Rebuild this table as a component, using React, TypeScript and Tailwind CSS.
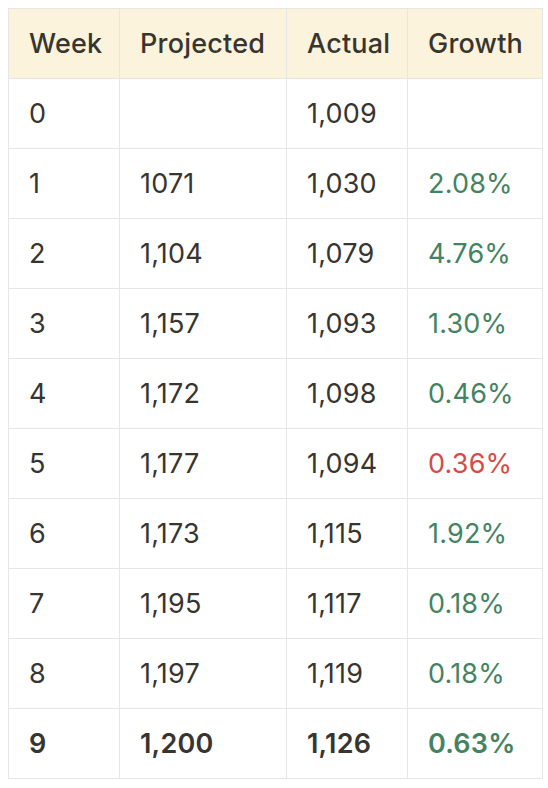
const rows: { week: string; projected: string; actual: string; growth: string; neg?: boolean }[] = [
  { week: "0", projected: "", actual: "1,009", growth: "" },
  { week: "1", projected: "1071", actual: "1,030", growth: "2.08%" },
  { week: "2", projected: "1,104", actual: "1,079", growth: "4.76%" },
  { week: "3", projected: "1,157", actual: "1,093", growth: "1.30%" },
  { week: "4", projected: "1,172", actual: "1,098", growth: "0.46%" },
  { week: "5", projected: "1,177", actual: "1,094", growth: "0.36%", neg: true },
  { week: "6", projected: "1,173", actual: "1,115", growth: "1.92%" },
  { week: "7", projected: "1,195", actual: "1,117", growth: "0.18%" },
  { week: "8", projected: "1,197", actual: "1,119", growth: "0.18%" },
];

const cell = "h-[70px] border border-[#e6e6e4] px-[20px] pt-[2px] align-middle";

export default function App() {
  return (
    <div className="bg-white p-[8px] font-['Inter',sans-serif] text-[27px] tracking-[0.2px] text-[#37352f]">
      <table className="w-[534px] table-fixed border-collapse text-left">
        <colgroup>
          <col className="w-[111px]" />
          <col className="w-[167px]" />
          <col className="w-[121px]" />
          <col className="w-[135px]" />
        </colgroup>
        <thead>
          <tr className="bg-[#fbf3db]">
            <th className={`${cell} font-medium`}>Week</th>
            <th className={`${cell} font-medium`}>Projected</th>
            <th className={`${cell} font-medium`}>Actual</th>
            <th className={`${cell} font-medium`}>Growth</th>
          </tr>
        </thead>
        <tbody>
          {rows.map((r) => (
            <tr key={r.week}>
              <td className={cell}>{r.week}</td>
              <td className={cell}>{r.projected}</td>
              <td className={cell}>{r.actual}</td>
              <td className={`${cell} ${r.neg ? "text-[#d44c47]" : "text-[#448361]"}`}>{r.growth}</td>
            </tr>
          ))}
          <tr className="font-semibold">
            <td className={cell}>9</td>
            <td className={cell}>1,200</td>
            <td className={cell}>1,126</td>
            <td className={`${cell} text-[#448361]`}>0.63%</td>
          </tr>
        </tbody>
      </table>
    </div>
  );
}
